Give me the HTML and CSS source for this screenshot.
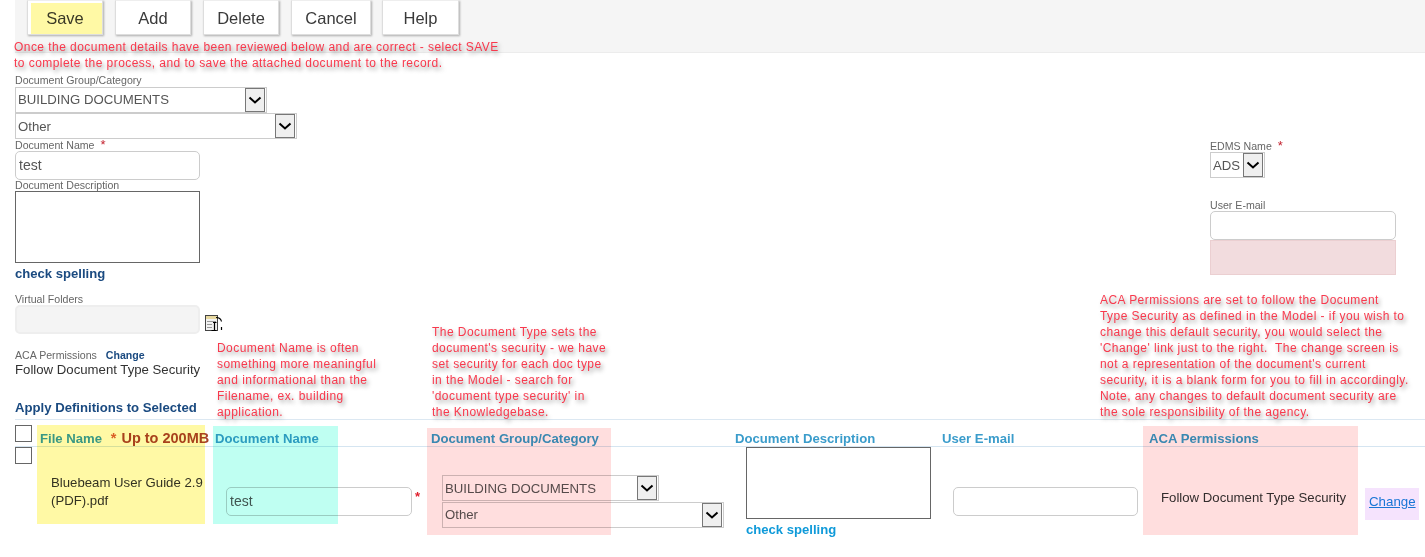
FILE: index.html
```html
<!DOCTYPE html>
<html lang="en">
<head>
    <meta charset="UTF-8">
    <meta name="viewport" content="width=device-width, initial-scale=1.0">
    <title>Document Details</title>
    <link rel="stylesheet" href="styles.css">
</head>
<body>
    <header class="toolbar">
        <button class="btn btn-save" type="button"><span class="mark mark-save"></span>Save</button>
        <button class="btn" type="button">Add</button>
        <button class="btn" type="button">Delete</button>
        <button class="btn btn-wide" type="button">Cancel</button>
        <button class="btn btn-help" type="button">Help</button>
    </header>

    <main class="details">
        <section class="details-left">
            <div class="label label-first">Document Group/Category</div>
            <div class="select select-group">
                <select><option>BUILDING DOCUMENTS</option></select>
                <span class="arrow"><svg width="14" height="8" viewBox="0 0 14 8"><path d="M1.500 1.500 7 6.500l5.500-5" fill="none" stroke="#000" stroke-width="2"/></svg></span>
            </div>
            <div class="select select-type">
                <select><option>Other</option></select>
                <span class="arrow"><svg width="14" height="8" viewBox="0 0 14 8"><path d="M1.500 1.500 7 6.500l5.500-5" fill="none" stroke="#000" stroke-width="2"/></svg></span>
            </div>
            <div class="label">Document Name <span class="req">*</span></div>
            <input class="field" type="text" value="test">
            <div class="label label-tight">Document Description</div>
            <textarea class="notes"></textarea>
            <a class="spell">check spelling</a>
            <div class="label label-folders">Virtual Folders</div>
            <div class="folders">
                <input class="field field-off" type="text" disabled>
                <svg class="folder-icon" width="18" height="17" viewBox="0 0 18 17">
                    <rect x="0.500" y="0.500" width="12" height="15" fill="#f2f2f2" stroke="#444"/>
                    <rect x="1" y="1" width="11" height="3" fill="#e8d9a0"/>
                    <path d="M2 6.500h9M2 9.500h5M2 12.500h5" stroke="#999"/>
                    <path d="M8 7.500h3.500M9.500 7.500v8M6.500 15.500h5M11 2.500c3 0 5 1.500 5.500 4M16.500 12v3" fill="none" stroke="#000" stroke-width="1.200"/>
                </svg>
            </div>
            <div class="aca-line"><span class="label-inline">ACA Permissions</span><a class="aca-change">Change</a></div>
            <div class="aca-value">Follow Document Type Security</div>
            <h2 class="apply">Apply Definitions to Selected</h2>
        </section>

        <aside class="details-right">
            <div class="label">EDMS Name <span class="req">*</span></div>
            <div class="select select-edms">
                <select><option>ADS</option></select>
                <span class="arrow"><svg width="14" height="8" viewBox="0 0 14 8"><path d="M1.500 1.500 7 6.500l5.500-5" fill="none" stroke="#000" stroke-width="2"/></svg></span>
            </div>
            <div class="label label-email">User E-mail</div>
            <input class="field" type="text">
            <div class="error-box"></div>
        </aside>
    </main>

    <section class="defs">
        <div class="defs-cols defs-head">
            <div><input class="check" type="checkbox"></div>
            <div class="head">File Name <span class="limit"><span class="limit-star">*</span> Up to 200MB</span></div>
            <div class="head">Document Name</div>
            <div class="head">Document Group/Category</div>
            <div class="head">Document Description</div>
            <div class="head">User E-mail</div>
            <div class="head">ACA Permissions</div>
            <div></div>
        </div>
        <div class="defs-cols defs-row">
            <div><input class="check" type="checkbox"></div>
            <div class="cell-file">Bluebeam User Guide 2.9 (PDF).pdf</div>
            <div class="cell-name"><input class="field" type="text" value="test"><span class="req">*</span></div>
            <div class="cell-group">
                <div class="select select-short">
                    <select><option>BUILDING DOCUMENTS</option></select>
                    <span class="arrow"><svg width="14" height="8" viewBox="0 0 14 8"><path d="M1.500 1.500 7 6.500l5.500-5" fill="none" stroke="#000" stroke-width="2"/></svg></span>
                </div>
                <div class="select select-type">
                    <select><option>Other</option></select>
                    <span class="arrow"><svg width="14" height="8" viewBox="0 0 14 8"><path d="M1.500 1.500 7 6.500l5.500-5" fill="none" stroke="#000" stroke-width="2"/></svg></span>
                </div>
            </div>
            <div class="cell-notes">
                <textarea class="notes"></textarea>
                <a class="spell spell-light">check spelling</a>
            </div>
            <div class="cell-email"><input class="field" type="text"></div>
            <div class="cell-aca">Follow Document Type Security</div>
            <div class="cell-change"><a href="#">Change</a></div>
        </div>
    </section>

    <!-- highlights and notes drawn over the screen -->
    <div class="mark mark-file"></div>
    <div class="mark mark-name"></div>
    <div class="mark mark-group"></div>
    <div class="mark mark-aca"></div>
    <div class="mark mark-change"></div>

    <p class="note note-save">Once the document details have been reviewed below and are correct - select SAVE<br>to complete the process, and to save the attached document to the record.</p>
    <p class="note note-name">Document Name is often<br>something more meaningful<br>and informational than the<br>Filename, ex. building<br>application.</p>
    <p class="note note-type">The Document Type sets the<br>document's security - we have<br>set security for each doc type<br>in the Model - search for<br>'document type security' in<br>the Knowledgebase.</p>
    <p class="note note-aca">ACA Permissions are set to follow the Document<br>Type Security as defined in the Model - if you wish to<br>change this default security, you would select the<br>'Change' link just to the right.&nbsp; The change screen is<br>not a representation of the document's current<br>security, it is a blank form for you to fill in accordingly.<br>Note, any changes to default document security are<br>the sole responsibility of the agency.</p>
</body>
</html>
```

FILE: styles.css
```css
body {
    font-family: "Liberation Sans", Arial, sans-serif;
    margin: 0;
    padding: 0;
    color: #333;
    background-color: #fff;
    position: relative;
    height: 557px;
    overflow: hidden;
}
.toolbar {
    display: flex;
    gap: 12px;
    height: 53px;
    box-sizing: border-box;
    margin-left: 15px;
    padding-left: 12px;
    background-color: #f5f5f5;
    border-bottom: 1px solid #ececec;
}
.btn {
    position: relative;
    width: 76px;
    height: 35px;
    padding: 1px 0 0;
    font-family: inherit;
    font-size: 16.500px;
    color: #3a3a3a;
    background-color: #fff;
    border: 1px solid #ddd;
    border-top-color: #eee;
    box-shadow: 1px 1px 2px rgba(0, 0, 0, 0.3);
}
.btn-wide {
    width: 80px;
}
.btn-help {
    width: 77px;
    margin-left: -1px;
}
.details {
    display: flex;
    justify-content: space-between;
    padding: 0 29px 0 15px;
}
.details-left {
    width: 300px;
}
.details-right {
    width: 186px;
    padding-top: 87px;
}
.label {
    font-size: 10.600px;
    line-height: 12px;
    height: 12px;
    color: #666;
}
.label-first {
    margin-top: 21px;
    height: 13px;
    line-height: 13px;
}
.label-tight {
    height: 11px;
    line-height: 11px;
}
.label-folders {
    margin-top: 12px;
}
.label-email {
    margin-top: 21px;
}
.req {
    color: #c3222f;
    font-size: 13px;
    margin-left: 3px;
}
.select {
    display: flex;
    box-sizing: border-box;
    height: 26px;
    padding: 0 1px 0 0;
    background-color: #fff;
    border: 1px solid #ccc;
}
.select select {
    flex: 1;
    min-width: 0;
    appearance: none;
    border: none;
    background: none;
    padding: 0 0 0 2px;
    font-family: inherit;
    font-size: 13.200px;
    color: #555;
}
.select-group select,
.cell-group .select-type select {
    padding-bottom: 2px;
}
.arrow {
    display: flex;
    align-items: center;
    justify-content: center;
    box-sizing: border-box;
    width: 20px;
    background-color: #efefef;
    border: 1px solid #777;
}
.select-group {
    width: 252px;
}
.select-type {
    width: 282px;
}
.select-short {
    width: 217px;
    margin-bottom: 1px;
}
.select-edms {
    width: 55px;
}
.field {
    display: block;
    box-sizing: border-box;
    width: 185px;
    height: 29px;
    padding: 0 3px 2px;
    font-family: inherit;
    font-size: 14px;
    color: #555;
    background-color: #fff;
    border: 1px solid #ccc;
    border-radius: 5px;
}
.details-right .field {
    width: 186px;
}
.field-off {
    background-color: #f4f4f4;
    border: 2px solid #eee;
}
.notes {
    display: block;
    box-sizing: border-box;
    width: 185px;
    height: 72px;
    margin: 0;
    padding: 0;
    resize: none;
    background-color: #fff;
    border: 1px solid #666;
}
.spell {
    display: block;
    margin-top: 3px;
    font-size: 13.100px;
    line-height: 15px;
    font-weight: bold;
    color: #1a4a80;
}
.spell-light {
    color: #0f9ad9;
}
.folders {
    display: flex;
    align-items: center;
    gap: 5px;
}
.folder-icon {
    margin-top: 7px;
}
.aca-line {
    margin-top: 15px;
    height: 13px;
    font-size: 10.600px;
    line-height: 13px;
}
.label-inline {
    color: #666;
}
.aca-change {
    margin-left: 9px;
    font-weight: bold;
    color: #1a4a80;
}
.aca-value {
    margin-top: 0;
    height: 16px;
    font-size: 13.200px;
    line-height: 16px;
    white-space: nowrap;
}
.apply {
    margin: 22px 0 0;
    font-size: 13.150px;
    line-height: 16px;
    color: #1a4a80;
    white-space: nowrap;
}
.error-box {
    box-sizing: border-box;
    width: 186px;
    height: 35px;
    background-color: #f2dcde;
    border: 1px solid #ebcfd1;
}
.defs {
    margin: 3px 0 0 15px;
    border-top: 1px solid #dce8f2;
}
.defs-cols {
    display: grid;
    grid-template-columns: 25px 175px 216px 304px 207px 207px 216px 1fr;
}
.defs-head {
    height: 27px;
    box-sizing: border-box;
    border-bottom: 1px solid #d5e5f1;
}
.defs-row {
    height: 88px;
}
.check {
    display: block;
    appearance: none;
    box-sizing: border-box;
    width: 17px;
    height: 17px;
    margin: 0;
    background-color: #fff;
    border: 1px solid #666;
}
.defs-head .check {
    margin-top: 5px;
}
.head {
    padding-top: 10px;
    font-size: 13.150px;
    line-height: 17px;
    font-weight: bold;
    color: #3a9ccb;
    white-space: nowrap;
}
.limit {
    margin-left: 5px;
    font-size: 14.500px;
    color: #a8432a;
}
.limit-star {
    margin-right: 1px;
    color: #d9603a;
}
.cell-file {
    padding: 27px 0 0 11px;
    font-size: 13.200px;
    line-height: 18px;
}
.cell-name {
    display: flex;
    gap: 0;
    padding: 40px 0 0 11px;
}
.cell-name .field {
    width: 186px;
}
.cell-name .req {
    margin: 2px 0 0 3px;
    font-weight: bold;
    color: #e01f2d;
}
.cell-group {
    padding: 28px 0 0 11px;
}
.cell-notes {
    padding-left: 11px;
}
.cell-email {
    padding: 40px 0 0 11px;
}
.cell-aca {
    padding: 43px 0 0 12px;
    font-size: 13.200px;
    line-height: 16px;
    white-space: nowrap;
}
.cell-change {
    padding: 47px 0 0 4px;
    font-size: 13.300px;
    line-height: 16px;
}
.cell-change a {
    color: #1a85d8;
}
/* translucent highlighter boxes */
.mark {
    position: absolute;
    mix-blend-mode: multiply;
}
.mark-save {
    left: 3px;
    top: 2px;
    right: 0;
    bottom: 0;
    background-color: #fff9a5;
}
.mark-file {
    left: 37px;
    top: 425px;
    width: 168px;
    height: 99px;
    background-color: #fff9a5;
}
.mark-name {
    left: 213px;
    top: 426px;
    width: 125px;
    height: 98px;
    background-color: #bffff2;
}
.mark-group {
    left: 427px;
    top: 428px;
    width: 184px;
    height: 107px;
    background-color: #ffdede;
}
.mark-aca {
    left: 1143px;
    top: 426px;
    width: 215px;
    height: 109px;
    background-color: #ffdede;
}
.mark-change {
    left: 1365px;
    top: 488px;
    width: 54px;
    height: 32px;
    background-color: #f5e3fd;
}
.note {
    position: absolute;
    margin: 0;
    font-size: 12px;
    line-height: 16px;
    letter-spacing: 0.450px;
    color: #f8394d;
    text-shadow: 2px 3px 4px rgba(0, 0, 0, 0.4);
    white-space: nowrap;
}
.note-save {
    left: 14px;
    top: 39px;
}
.note-name {
    left: 217px;
    top: 340px;
}
.note-type {
    left: 432px;
    top: 324px;
}
.note-aca {
    left: 1100px;
    top: 292px;
}
```
